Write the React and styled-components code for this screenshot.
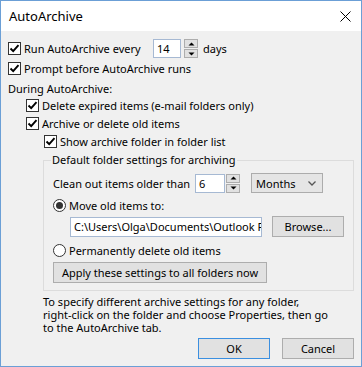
import React from 'react'
import styled, { createGlobalStyle } from 'styled-components'

const GlobalStyle = createGlobalStyle`
  body {
    margin: 0;
    background: #ffffff;
    font-family: "Noto Sans", "Open Sans", sans-serif;
    font-size: 11px;
    color: #000;
  }
`

function Check() {
    return (
        <CheckBox>
            <svg width="11" height="11" viewBox="0 0 11 11">
                <path d="M1.5 5.5 L4.2 8.2 L9.5 2.2" fill="none" stroke="#000" strokeWidth="1.9" />
            </svg>
        </CheckBox>
    )
}

function Spin({ value, width, gap }) {
    return (
        <>
            <TextBox $w={width}>{value}</TextBox>
            <Spinner $gap={gap}>
                <SpinBtn>
                    <svg width="7" height="4" viewBox="0 0 7 4"><path d="M0.5 3.5 L3.5 0.5 L6.5 3.5 Z" fill="#000" /></svg>
                </SpinBtn>
                <SpinBtn>
                    <svg width="7" height="4" viewBox="0 0 7 4"><path d="M0.5 0.5 L3.5 3.5 L6.5 0.5 Z" fill="#000" /></svg>
                </SpinBtn>
            </Spinner>
        </>
    )
}

function App() {
    return (
        <Window>
            <GlobalStyle />
            <TitleBar>
                <span>AutoArchive</span>
                <svg width="11" height="11" viewBox="0 0 11 11">
                    <path d="M0.5 0.5 L10.5 10.5 M10.5 0.5 L0.5 10.5" stroke="#000" strokeWidth="1" />
                </svg>
            </TitleBar>
            <Body>
                <Row $h={19}>
                    <Check />
                    <Label $w={129}>Run AutoArchive every</Label>
                    <Spin value="14" width={28} gap={3} />
                    <Label $ml={5}>days</Label>
                </Row>
                <Row $h={21}>
                    <Check />
                    <Label>Prompt before AutoArchive runs</Label>
                </Row>
                <Row $h={18} $indent={-1}>
                    <Label>During AutoArchive:</Label>
                </Row>
                <Row $h={17} $indent={18}>
                    <Check />
                    <Label>Delete expired items (e-mail folders only)</Label>
                </Row>
                <Row $h={18} $indent={18}>
                    <Check />
                    <Label>Archive or delete old items</Label>
                </Row>
                <Row $h={19} $indent={36}>
                    <Check />
                    <Label>Show archive folder in folder list</Label>
                </Row>
                <Group>
                    <Legend>Default folder settings for archiving</Legend>
                    <Row $h={20} $mt={4}>
                        <Label $w={142}>Clean out items older than</Label>
                        <Spin value="6" width={30} gap={1} />
                        <Select>
                            <span>Months</span>
                            <svg width="8" height="5" viewBox="0 0 8 5">
                                <path d="M0.5 0.5 L4 4 L7.5 0.5" fill="none" stroke="#555" strokeWidth="1.3" />
                            </svg>
                        </Select>
                    </Row>
                    <Row $h={20} $mt={2}>
                        <Radio $on />
                        <Label>Move old items to:</Label>
                    </Row>
                    <Row $h={21} $mt={1} $indent={17}>
                        <PathBox>C:\Users\Olga\Documents\Outlook F</PathBox>
                        <Button $w={72} $ml={10}>Browse...</Button>
                    </Row>
                    <Row $h={20} $mt={3}>
                        <Radio />
                        <Label>Permanently delete old items</Label>
                    </Row>
                    <Row $h={21} $mt={2}>
                        <Button $w={214}>Apply these settings to all folders now</Button>
                    </Row>
                </Group>
                <Note>
                    To specify different archive settings for any folder,<br />
                    right-click on the folder and choose Properties, then go<br />
                    to the AutoArchive tab.
                </Note>
                <Footer>
                    <Button $w={72} $default>OK</Button>
                    <Button $w={72}>Cancel</Button>
                </Footer>
            </Body>
        </Window>
    )
}

export default App

const Window = styled.div`
    width: 362px;
    height: 367px;
    box-sizing: border-box;
    border: 1px solid #6b9fd6;
    background: #f0f0f0;
    display: flex;
    flex-direction: column;
`
const TitleBar = styled.div`
    height: 30px;
    flex-shrink: 0;
    background: #ffffff;
    display: flex;
    align-items: center;
    justify-content: space-between;
    padding: 0 10px 0 8px;
    font-size: 13px;
`
const Body = styled.div`
    flex: 1;
    padding: 8px 7px 0 7px;
    display: flex;
    flex-direction: column;
`
const Row = styled.div`
    display: flex;
    align-items: center;
    flex-shrink: 0;
    height: ${props => props.$h}px;
    margin-top: ${props => props.$mt || 0}px;
    padding-left: ${props => props.$indent || 0}px;
    white-space: nowrap;
`
const Label = styled.span`
    flex-shrink: 0;
    width: ${props => props.$w ? `${props.$w}px` : 'auto'};
    margin-left: ${props => props.$ml || 0}px;
`
const CheckBox = styled.span`
    width: 13px;
    height: 13px;
    box-sizing: border-box;
    border: 1px solid #333;
    background: #fff;
    display: flex;
    align-items: center;
    justify-content: center;
    margin-right: 3px;
    flex-shrink: 0;
`
const Radio = styled.span`
    width: 13px;
    height: 13px;
    box-sizing: border-box;
    border: 1px solid #333;
    border-radius: 50%;
    background: #fff;
    margin-right: 3px;
    flex-shrink: 0;
    display: flex;
    align-items: center;
    justify-content: center;
    &::after {
        content: '';
        width: 7px;
        height: 7px;
        border-radius: 50%;
        background: #333;
        display: ${props => props.$on ? 'block' : 'none'};
    }
`
const TextBox = styled.div`
    width: ${props => props.$w}px;
    height: 19px;
    box-sizing: border-box;
    border: 1px solid #a6b9d3;
    background: #fff;
    padding-left: 3px;
    line-height: 17px;
    flex-shrink: 0;
`
const Spinner = styled.div`
    display: flex;
    flex-direction: column;
    justify-content: space-between;
    width: 14px;
    height: 19px;
    margin-left: ${props => props.$gap}px;
    flex-shrink: 0;
`
const SpinBtn = styled.div`
    height: 9px;
    box-sizing: border-box;
    border: 1px solid #adadad;
    background: #e1e1e1;
    display: flex;
    align-items: center;
    justify-content: center;
`
const Select = styled.div`
    width: 72px;
    height: 20px;
    box-sizing: border-box;
    margin-left: 11px;
    border: 1px solid #acacac;
    background: #e5e5e5;
    display: flex;
    align-items: center;
    justify-content: space-between;
    padding: 0 6px 0 4px;
`
const Group = styled.fieldset`
    margin: 0 0 0 35px;
    padding: 0 0 7px 9px;
    border: 1px solid #dcdcdc;
    min-inline-size: 0;
`
const Legend = styled.legend`
    padding: 0 1px;
    margin-left: -2px;
    line-height: 18px;
`
const PathBox = styled.div`
    width: 192px;
    height: 20px;
    box-sizing: border-box;
    border: 1px solid #a6b9d3;
    background: #fff;
    padding-left: 3px;
    line-height: 18px;
    overflow: hidden;
    white-space: nowrap;
    flex-shrink: 0;
`
const Button = styled.div`
    width: ${props => props.$w}px;
    height: 21px;
    box-sizing: border-box;
    margin-left: ${props => props.$ml || 0}px;
    border: 1px solid ${props => props.$default ? '#3b8fe0' : '#adadad'};
    background: #e1e1e1;
    display: flex;
    align-items: center;
    justify-content: center;
    flex-shrink: 0;
`
const Note = styled.div`
    margin: 4px 0 0 35px;
    line-height: 13px;
    white-space: nowrap;
`
const Footer = styled.div`
    display: flex;
    justify-content: flex-end;
    gap: 12px;
    margin-top: 4px;
`
